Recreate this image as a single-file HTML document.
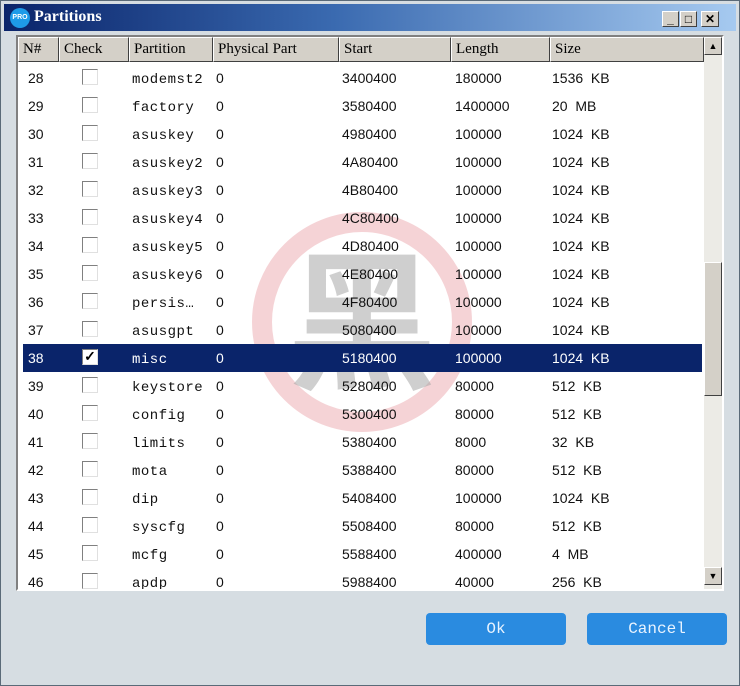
<!DOCTYPE html>
<html><head><meta charset="utf-8"><style>
*{margin:0;padding:0;box-sizing:border-box}
body{width:740px;height:686px;background:#d6dde2;position:relative;overflow:hidden;font-family:"Liberation Sans",sans-serif}
#frame{position:absolute;left:0;top:0;width:740px;height:686px;border:1px solid #5a6a78;}
#title{position:absolute;left:4px;top:4px;width:732px;height:27px;background:linear-gradient(90deg,#0a246a 0%,#3a6ab0 45%,#a6caf0 100%)}
#title .t{position:absolute;left:30px;top:4px;color:#fff;font:bold 16px "Liberation Serif",serif}
#logo{position:absolute;left:6px;top:4px;width:20px;height:20px;border-radius:50%;background:#1e9be8;color:#fff;font:bold 7px "Liberation Sans";text-align:center;line-height:20px}
.wb{position:absolute;top:7px;width:17px;height:16px;background:#d4d0c8;border:1px solid;border-color:#fff #404040 #404040 #fff;font:bold 12px "Liberation Sans";text-align:center;line-height:14px}
#list{position:absolute;left:16px;top:35px;width:708px;height:556px;background:#fff;border:2px solid;border-color:#808080 #fff #fff #808080;overflow:hidden}
.hd{position:absolute;top:0;height:25px;background:#d4d0c8;border:1px solid;border-color:#fff #404040 #404040 #fff;font:15px "Liberation Serif",serif;padding:3px 0 0 4px;color:#000}
.row{position:absolute;left:0;width:684px;height:28px;font-size:14px;color:#111}
.row span{position:absolute;top:6px}
.row .p{font-family:"Liberation Mono",monospace;font-size:14px;letter-spacing:0.5px;top:8px}
.cb{position:absolute;left:64px;top:5px;width:16px;height:16px;border:1px solid;border-color:#808080 #e0e0e0 #e0e0e0 #808080;background:#fff}
.sel{background:#0a246a;color:#fff}
.sel .cb{color:#000;font-size:14px;line-height:13px;text-align:center;font-weight:bold}
#sb{position:absolute;left:686px;top:0;width:18px;height:552px;background:#ecebe6}
.sbb{position:absolute;left:0;width:18px;height:18px;background:#d4d0c8;border:1px solid;border-color:#fff #404040 #404040 #fff;font-size:9px;text-align:center;line-height:16px}
.btn{position:absolute;top:613px;width:140px;height:32px;background:#2a8be0;border-radius:4px;color:#e8f3ff;font:16px "Liberation Mono",monospace;text-align:center;line-height:32px}
</style></head><body>
<div id="frame"></div>
<div id="title"><div id="logo">PRO</div><div class="t">Partitions</div>
<div class="wb" style="left:658px">_</div><div class="wb" style="left:676px">□</div><div class="wb" style="left:697px;width:18px">✕</div></div>
<div id="list">
<svg style="position:absolute;left:0;top:0" width="708" height="556">
<circle cx="344" cy="285" r="100" fill="none" stroke="#f2c4c8" stroke-width="20" opacity="0.75"/>
<text x="344" y="340" text-anchor="middle" font-family="Noto Sans CJK SC,sans-serif" font-weight="bold" font-size="150" fill="#a8a8a8" opacity="0.55">黑</text>
</svg>
<div class="hd" style="left:0;width:41px">N#</div>
<div class="hd" style="left:41px;width:70px">Check</div>
<div class="hd" style="left:111px;width:84px">Partition</div>
<div class="hd" style="left:195px;width:126px">Physical Part</div>
<div class="hd" style="left:321px;width:112px">Start</div>
<div class="hd" style="left:433px;width:99px">Length</div>
<div class="hd" style="left:532px;width:154px">Size</div>
<div id="rows"></div>
<div id="sb"><div class="sbb" style="top:0">▲</div>
<div style="position:absolute;left:0;top:225px;width:18px;height:134px;background:#d4d0c8;border:1px solid;border-color:#fff #404040 #404040 #fff"></div>
<div class="sbb" style="top:530px">▼</div></div>
</div>
<div class="btn" style="left:426px">Ok</div>
<div class="btn" style="left:587px">Cancel</div>
<script>
var d=[[28,"modemst2","3400400","180000","1536 KB"],[29,"factory","3580400","1400000","20 MB"],[30,"asuskey","4980400","100000","1024 KB"],[31,"asuskey2","4A80400","100000","1024 KB"],[32,"asuskey3","4B80400","100000","1024 KB"],[33,"asuskey4","4C80400","100000","1024 KB"],[34,"asuskey5","4D80400","100000","1024 KB"],[35,"asuskey6","4E80400","100000","1024 KB"],[36,"persis\u2026","4F80400","100000","1024 KB"],[37,"asusgpt","5080400","100000","1024 KB"],[38,"misc","5180400","100000","1024 KB"],[39,"keystore","5280400","80000","512 KB"],[40,"config","5300400","80000","512 KB"],[41,"limits","5380400","8000","32 KB"],[42,"mota","5388400","80000","512 KB"],[43,"dip","5408400","100000","1024 KB"],[44,"syscfg","5508400","80000","512 KB"],[45,"mcfg","5588400","400000","4 MB"],[46,"apdp","5988400","40000","256 KB"]];
var h="";d.forEach(function(r,i){var s=r[0]==38;h+='<div class="row'+(s?' sel':'')+'" style="top:'+(27+i*28)+'px;'+(s?'left:5px;width:679px':'')+'">'+'<span style="left:'+(s?5:10)+'px">'+r[0]+'</span><div class="cb" style="'+(s?'left:59px':'')+'">'+(s?'✓':'')+'</div><span class="p" style="left:'+(s?109:114)+'px">'+r[1]+'</span><span style="left:'+(s?193:198)+'px">0</span><span style="left:'+(s?319:324)+'px">'+r[2]+'</span><span style="left:'+(s?432:437)+'px">'+r[3]+'</span><span style="left:'+(s?529:534)+'px">'+r[4].replace(' ','&nbsp; ')+'</span></div>'});document.getElementById("rows").innerHTML=h;
</script>
</body></html>
